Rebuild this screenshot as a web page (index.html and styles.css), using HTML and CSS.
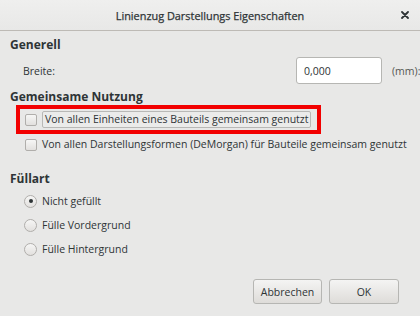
FILE: index.html
```html
<!DOCTYPE html>
<html lang="de">
<head>
<meta charset="UTF-8">
<title>Linienzug Darstellungs Eigenschaften</title>
<link rel="stylesheet" href="styles.css">
</head>
<body>
<div class="dialog">
  <!-- Titelleiste -->
  <header class="titlebar">
    <span class="title">Linienzug Darstellungs Eigenschaften</span>
    <span class="close">
      <svg width="8" height="8" viewBox="0 0 8 8"><path d="M1 1 L7 7 M7 1 L1 7" stroke="#2e3436" stroke-width="1.8" stroke-linecap="round"/></svg>
    </span>
  </header>

  <main class="content">
    <h2>Generell</h2>
    <div class="field-row">
      <span class="field-label">Breite:</span>
      <input type="text" class="entry" value="0,000">
      <span class="unit">(mm):</span>
    </div>

    <h2 class="group-head">Gemeinsame Nutzung</h2>
    <div class="check-row">
      <span class="option marked">
        <span class="check"></span>
        <span class="option-text focused">Von allen Einheiten eines Bauteils gemeinsam genutzt</span>
      </span>
    </div>
    <div class="check-row">
      <span class="option">
        <span class="check"></span>
        <span class="option-text">Von allen Darstellungsformen (DeMorgan) für Bauteile gemeinsam genutzt</span>
      </span>
    </div>

    <h2 class="spaced">Füllart</h2>
    <div class="radio-row">
      <span class="option"><span class="radio checked"></span><span class="option-text">Nicht gefüllt</span></span>
    </div>
    <div class="radio-row">
      <span class="option"><span class="radio"></span><span class="option-text">Fülle Vordergrund</span></span>
    </div>
    <div class="radio-row">
      <span class="option"><span class="radio"></span><span class="option-text">Fülle Hintergrund</span></span>
    </div>
  </main>

  <footer class="actions">
    <button class="btn btn-cancel">Abbrechen</button>
    <button class="btn btn-ok">OK</button>
  </footer>
</div>
</body>
</html>
```

FILE: styles.css
```css
body {
  margin: 0;
  background-color: #e8e8e7;
  color: #2e3436;
  font-family: "Open Sans", "DejaVu Sans", sans-serif;
  font-size: 10.5px;
  overflow: hidden;
}
.dialog {
  width: 420px;
  height: 316px;
  overflow: hidden;
}
.titlebar {
  height: 30px;
  border-bottom: 1px solid #bdbab5;
  background: linear-gradient(#efefee, #e8e8e7);
  display: flex;
  align-items: center;
  justify-content: center;
  position: relative;
}
.title {
  font-size: 10.9px;
  color: #2e3436;
  -webkit-text-stroke: 0.25px #2e3436;
}
.close {
  position: absolute;
  right: 11px;
  top: 11px;
  line-height: 0;
}
.content {
  padding: 6px 0 0 10px;
}
h2 {
  margin: 0;
  font-size: 12px;
  font-weight: bold;
  line-height: 16px;
}
.group-head { margin-bottom: 2px; }
.field-row {
  display: flex;
  align-items: center;
  height: 27px;
  margin: 4px 0 5px;
  padding-left: 13px;
}
.field-label { flex: 1; }
.entry {
  width: 86px;
  height: 27px;
  box-sizing: border-box;
  border: 1px solid #b6b6b3;
  border-radius: 3px;
  background: #ffffff;
  padding: 0 7px;
  font-family: inherit;
  font-size: 10.5px;
  color: #2e3436;
}
.unit {
  margin-left: 10px;
  width: 28px;
  white-space: nowrap;
  color: #555753;
}
.check-row, .radio-row {
  height: 25px;
  display: flex;
  align-items: center;
}
.radio-row { height: 24px; }
.option {
  display: inline-flex;
  align-items: center;
  height: 21px;
  margin-left: 10px;
  padding: 0 6px 0 5px;
  white-space: nowrap;
}
.marked { outline: 4px solid #f20000; }
.check {
  flex: none;
  width: 12px;
  height: 12px;
  box-sizing: border-box;
  border: 1px solid #b0aeab;
  border-radius: 2px;
  background: linear-gradient(#f6f6f5, #e2e0de);
  margin-right: 5px;
}
.radio {
  flex: none;
  width: 13px;
  height: 13px;
  box-sizing: border-box;
  border: 1px solid #b0aeab;
  border-radius: 50%;
  background: linear-gradient(#f6f6f5, #e2e0de);
  margin: 0 5px 0 -1px;
  display: flex;
  align-items: center;
  justify-content: center;
}
.radio.checked::after {
  content: "";
  width: 4px;
  height: 4px;
  border-radius: 50%;
  background: #2e3436;
}
.option-text { line-height: 15px; }
.focused {
  border: 1px solid #b8b8b6;
  border-radius: 2px;
  padding: 0 2px;
  background: #ebebea;
}
.spaced { margin-top: 14px; margin-bottom: 2px; }
.actions {
  display: flex;
  justify-content: flex-end;
  gap: 7px;
  padding: 18px 21px 0 0;
}
.btn {
  height: 25px;
  width: 69px;
  border: 1px solid #b6b6b3;
  border-radius: 3px;
  background: linear-gradient(#f4f4f3, #dedcd9);
  font-family: inherit;
  font-size: 10.5px;
  color: #2e3436;
  padding: 0;
}
.btn-ok { width: 70px; }
```
